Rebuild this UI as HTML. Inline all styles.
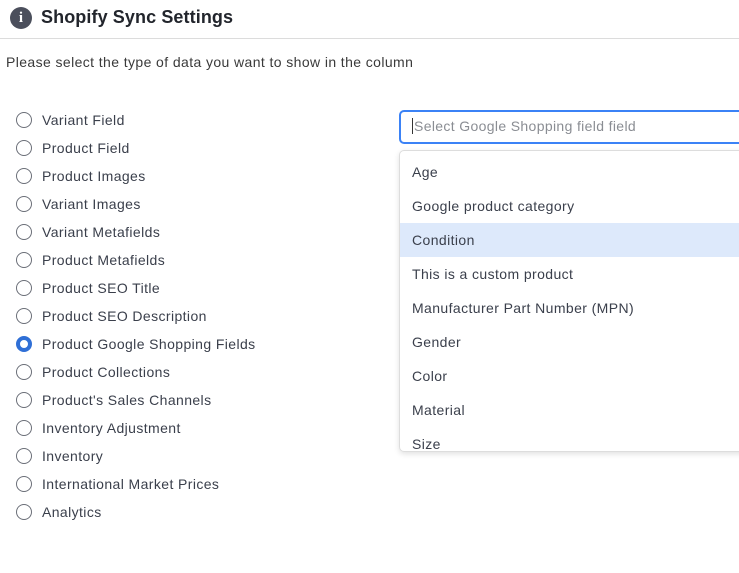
<!DOCTYPE html>
<html><head><style>
body{margin:0;width:739px;height:573px;overflow:hidden;background:#fff;font-family:"Liberation Sans",sans-serif;color:#3a3f4b;position:relative;letter-spacing:0.4px}
.hdr{position:absolute;left:0;top:0;width:739px;height:38px;border-bottom:1px solid #dcdcdc}
.ic{position:absolute;left:10px;top:7px;width:22px;height:22px;border-radius:50%;background:#4b4f5c;color:#fff;font:bold 15px "Liberation Serif",serif;text-align:center;line-height:22px;letter-spacing:0}
.tt{position:absolute;left:41px;top:7px;font-weight:bold;font-size:18px;color:#22252c;letter-spacing:0.1px}
.p{position:absolute;left:6px;top:54px;font-size:14px;color:#3a3a3a}
.r{position:absolute;left:16px;height:20px;font-size:14px;line-height:20px}
.r i{position:absolute;left:0;top:2px;width:14px;height:14px;border:1px solid #6b6f78;border-radius:50%}
.r i.on{border:4px solid #2f6fd6;width:8px;height:8px}
.r span{position:absolute;left:26px;white-space:nowrap}
.sel{position:absolute;left:399px;top:110px;width:360px;height:30px;border:2px solid #3b82f6;border-radius:5px}
.sel span{position:absolute;left:11px;top:6px;font-size:14px;color:#8a8d93;border-left:1px solid #333;padding-left:1px;letter-spacing:0.35px}
.dd{position:absolute;left:399px;top:150px;width:360px;height:300px;border:1px solid #ddd;border-radius:5px;box-shadow:0 2px 6px rgba(0,0,0,.12);overflow:hidden}
.it{position:absolute;left:0;width:100%;height:34px;line-height:34px;font-size:14px;padding-left:12px;box-sizing:border-box;color:#3a3f4b}
.it.h{background:#dde9fb}
</style></head><body>
<div class="hdr"><div class="ic">i</div><div class="tt">Shopify Sync Settings</div></div>
<div class="p">Please select the type of data you want to show in the column</div>
<div class="r" style="top:110px"><i></i><span>Variant Field</span></div>
<div class="r" style="top:138px"><i></i><span>Product Field</span></div>
<div class="r" style="top:166px"><i></i><span>Product Images</span></div>
<div class="r" style="top:194px"><i></i><span>Variant Images</span></div>
<div class="r" style="top:222px"><i></i><span>Variant Metafields</span></div>
<div class="r" style="top:250px"><i></i><span>Product Metafields</span></div>
<div class="r" style="top:278px"><i></i><span>Product SEO Title</span></div>
<div class="r" style="top:306px"><i></i><span>Product SEO Description</span></div>
<div class="r" style="top:334px"><i class="on"></i><span>Product Google Shopping Fields</span></div>
<div class="r" style="top:362px"><i></i><span>Product Collections</span></div>
<div class="r" style="top:390px"><i></i><span>Product's Sales Channels</span></div>
<div class="r" style="top:418px"><i></i><span>Inventory Adjustment</span></div>
<div class="r" style="top:446px"><i></i><span>Inventory</span></div>
<div class="r" style="top:474px"><i></i><span>International Market Prices</span></div>
<div class="r" style="top:502px"><i></i><span>Analytics</span></div>
<div class="sel"><span>Select Google Shopping field field</span></div>
<div class="dd">
<div class="it" style="top:4px">Age</div>
<div class="it" style="top:38px">Google product category</div>
<div class="it h" style="top:72px">Condition</div>
<div class="it" style="top:106px">This is a custom product</div>
<div class="it" style="top:140px">Manufacturer Part Number (MPN)</div>
<div class="it" style="top:174px">Gender</div>
<div class="it" style="top:208px">Color</div>
<div class="it" style="top:242px">Material</div>
<div class="it" style="top:276px">Size</div>
</div>
</body></html>
